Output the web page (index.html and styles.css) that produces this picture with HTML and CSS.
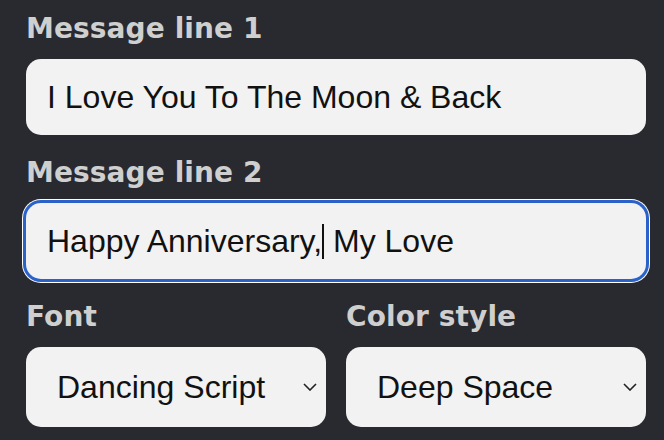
FILE: index.html
```html
<!DOCTYPE html>
<html lang="en">
<head>
<meta charset="utf-8">
<link rel="stylesheet" href="styles.css">
</head>
<body>
<form class="panel">
  <div class="group">
    <label class="label" for="m1">Message line 1</label>
    <input class="field" id="m1" type="text" value="I Love You To The Moon &amp; Back">
  </div>
  <div class="group">
    <label class="label">Message line 2</label>
    <div class="field focused" role="textbox"><span>Happy Anniversary,</span><span class="caret"></span><span>&nbsp;My Love</span></div>
  </div>
  <div class="row">
    <div class="group">
      <label class="label">Font</label>
      <div class="select" role="combobox"><span>Dancing Script</span>
        <svg class="chev" width="14" height="8" viewBox="0 0 14 8"><path d="M1 1 L7 7 L13 1" fill="none" stroke="#222" stroke-width="1.6"/></svg>
      </div>
    </div>
    <div class="group">
      <label class="label">Color style</label>
      <div class="select" role="combobox"><span>Deep Space</span>
        <svg class="chev" width="14" height="8" viewBox="0 0 14 8"><path d="M1 1 L7 7 L13 1" fill="none" stroke="#222" stroke-width="1.6"/></svg>
      </div>
    </div>
  </div>
</form>
</body>
</html>
```
FILE: styles.css
```css
html, body {
  margin: 0;
  padding: 0;
  background: #292a2f;
}
.panel {
  width: 620px;
  padding: 7px 18px 0 26px;
  display: flex;
  flex-direction: column;
  gap: 16px;
}
.group {
  display: flex;
  flex-direction: column;
  gap: 10px;
}
.label {
  font-family: "DejaVu Sans", sans-serif;
  font-weight: 700;
  font-size: 28px;
  line-height: 40px;
  padding-top: 2px;
  letter-spacing: 0.1px;
  color: #cfcfcf;
}
.field {
  box-sizing: border-box;
  width: 620px;
  height: 76px;
  border: none;
  border-radius: 15px;
  background: #f2f2f2;
  padding: 0 21px;
  font-family: "Liberation Sans", Arial, sans-serif;
  font-size: 32px;
  color: #111;
  outline: none;
  display: flex;
  align-items: center;
  margin: 0;
}
.focused {
  box-shadow: 0 0 0 3px #2a62c9, 0 0 0 4px #ffffff;
  white-space: pre;
}
.caret {
  display: inline-block;
  width: 2px;
  height: 35px;
  background: #111;
}
.row {
  display: grid;
  grid-template-columns: 300px 300px;
  gap: 20px;
}
.select {
  box-sizing: border-box;
  height: 80px;
  border-radius: 15px;
  background: #f2f2f2;
  padding: 0 9px 0 31px;
  font-family: "Liberation Sans", Arial, sans-serif;
  font-size: 32px;
  color: #111;
  display: flex;
  align-items: center;
  justify-content: space-between;
}
.chev {
  flex: none;
}
```
